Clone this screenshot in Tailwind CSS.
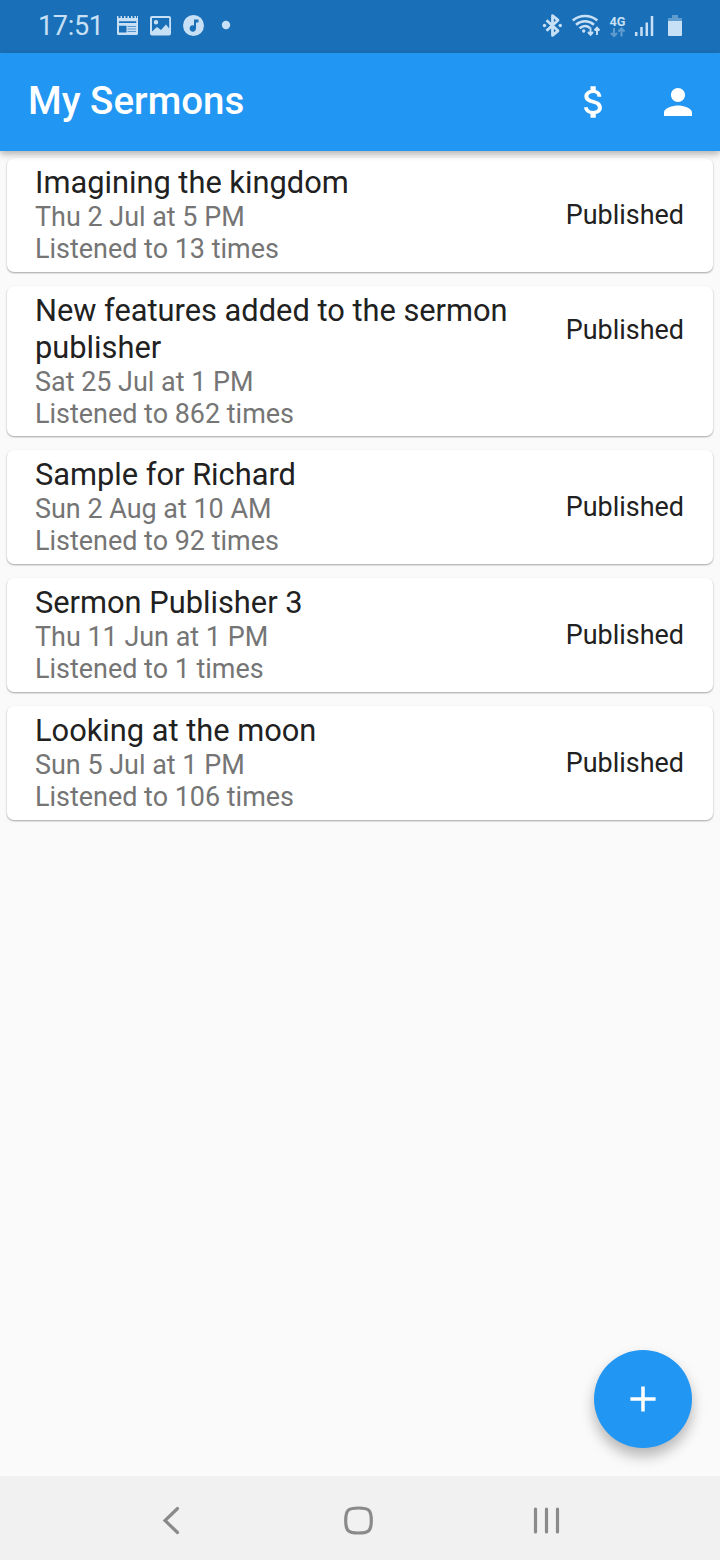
<!DOCTYPE html>
<html lang="en">
<head>
<meta charset="utf-8">
<title>My Sermons</title>
<script src="https://cdn.jsdelivr.net/npm/@tailwindcss/browser@4"></script>
</head>
<body class="bg-[#fafafa] font-[Roboto,sans-serif] text-[#212121]">
<div class="relative flex h-[1560px] w-[720px] flex-col overflow-hidden">
  <div class="z-10 flex h-[53px] shrink-0 items-start bg-[#1a70b8] pl-[38px] text-[#c8e0f5]">
    <span class="w-[74px] pt-[10px] text-[27px] leading-8 tracking-[-0.3px]">17:51</span>
    <svg class="h-[53px] w-[126px]" viewBox="112 0 126 53" fill="currentColor">
      <path fill-rule="evenodd" d="M117 16h1.500v2h2v-2h1.500v2h2v-2h1.500v2h2v-2h1.500v2h2v-2h1.500v2h2v-2h1.500v2h1v-2h1v17.500a1.500 1.500 0 0 1-1.500 1.500h-18a1.500 1.500 0 0 1-1.500-1.500zM119 21.300v1.700h17.200v-1.700zM119 25.800v6.700h7.500v-6.700z"/>
      <path d="M127.500 26.500h8.500M127.500 29h8.500M127.500 31.500h8.500" stroke="#1a70b8" stroke-width="1" opacity=".65"/>
      <path fill-rule="evenodd" d="M152 16h17a2 2 0 0 1 2 2v15.500a2 2 0 0 1-2 2h-17a2 2 0 0 1-2-2V18a2 2 0 0 1 2-2zM152 18v13.500l5-4.500 4 3 5-5.500 3.200 4V18zM156 20a2.200 2.200 0 1 1 0 4.400a2.200 2.200 0 0 1 0-4.400z"/>
      <circle cx="193.500" cy="25.500" r="10.500"/>
      <path d="M194 19.500h4.500v3H196v6a3.200 3.200 0 1 1-2-3z" fill="#1a70b8"/>
      <circle cx="226" cy="25" r="4.200"/>
    </svg>
    <svg class="ml-auto h-[53px] w-[180px]" viewBox="540 0 180 53" fill="none" stroke="currentColor" stroke-width="2.500">
      <path d="M546.500 20.300l11.500 10.500-5.500 4.500V15.700l5.500 4.500-11.500 10.500" stroke-linejoin="round" stroke-width="2.800"/>
      <circle cx="544.500" cy="25.500" r="1.700" fill="currentColor" stroke="none"/><circle cx="560.300" cy="25.500" r="1.700" fill="currentColor" stroke="none"/>
      <path d="M572.800 20.500c7-6 17.500-6 24.500 0M576 24.700c5.500-4.500 12.500-4.500 18 0M579.500 28.300c3.500-2.800 7.500-2.800 10.500-.3"/>
      <circle cx="583.700" cy="31" r="1.700" fill="currentColor" stroke="none"/>
      <path d="M590.500 27.500v7M588 32l2.500 2.800 2.500-2.800M597 35v-7M594.500 30.500l2.500-2.800 2.500 2.800" stroke-width="1.900"/>
      <text x="609.500" y="25.500" font-size="13.200" font-weight="700" fill="currentColor" stroke="none" textLength="16" lengthAdjust="spacingAndGlyphs">4G</text>
      <path d="M614 28v8M611 33l3 3 3-3M621.500 36.500v-8M618.500 31.500l3-3 3 3" opacity=".4" stroke-width="2"/>
      <path d="M636.200 32v4M641.500 27v9M646.800 22.500V36M652 16v20" stroke-width="2.500"/>
      <path d="M672 15h6v3h4v3h-14v-3h4z" fill="currentColor" stroke="none" opacity=".4"/>
      <path d="M668 21h14v14a1 1 0 0 1-1 1h-12a1 1 0 0 1-1-1z" fill="currentColor" stroke="none"/>
    </svg>
  </div>
  <header class="z-10 flex h-[98px] shrink-0 items-center bg-[#2196f3] pr-[21px] pl-7 text-white shadow-[0_3px_7px_rgba(0,0,0,0.3)]">
    <h1 class="-mt-[2px] text-[38.5px] leading-none font-medium">My Sermons</h1>
    <svg class="ml-auto size-[42px]" viewBox="0 0 24 24" fill="currentColor"><path d="M11.800 10.900c-2.270-.59-3-1.200-3-2.150 0-1.090 1.010-1.850 2.700-1.850 1.780 0 2.440.85 2.500 2.100h2.210c-.07-1.720-1.120-3.300-3.210-3.810V3h-3v2.160c-1.940.42-3.500 1.680-3.500 3.610 0 2.310 1.910 3.460 4.700 4.130 2.500.6 3 1.480 3 2.410 0 .69-.49 1.790-2.700 1.790-2.060 0-2.870-.92-2.980-2.100h-2.200c.12 2.190 1.760 3.420 3.680 3.830V21h3v-2.150c1.950-.37 3.500-1.500 3.500-3.550 0-2.840-2.430-3.810-4.700-4.400z"/></svg>
    <svg class="ml-[42px] size-[42px]" viewBox="0 0 24 24" fill="currentColor"><path d="M12 12c2.210 0 4-1.790 4-4s-1.790-4-4-4-4 1.790-4 4 1.790 4 4 4zm0 2c-2.670 0-8 1.340-8 4v2h16v-2c0-2.660-5.330-4-8-4z"/></svg>
  </header>
  <main class="flex grow flex-col gap-[14px] px-[7px] pt-[7px]">
    <article class="flex h-[114px] justify-between rounded-[7px] bg-white pt-[6px] pr-[29px] pl-7 shadow-[0_1px_2px_rgba(0,0,0,0.35)]">
      <div><h2 class="text-[30.8px] leading-[37px]">Imagining the kingdom</h2><p class="text-[26.95px] leading-8 text-[#757575]">Thu 2 Jul at 5 PM<br>Listened to 13 times</p></div>
      <span class="pt-[35px] text-[26.95px] leading-8">Published</span>
    </article>
    <article class="flex h-[150px] justify-between rounded-[7px] bg-white pt-[6px] pr-[29px] pl-7 shadow-[0_1px_2px_rgba(0,0,0,0.35)]">
      <div><h2 class="text-[30.8px] leading-[37px]">New features added to the sermon<br>publisher</h2><p class="text-[26.95px] leading-8 text-[#757575]">Sat 25 Jul at 1 PM<br>Listened to 862 times</p></div>
      <span class="pt-[22px] text-[26.95px] leading-8">Published</span>
    </article>
    <article class="flex h-[114px] justify-between rounded-[7px] bg-white pt-[6px] pr-[29px] pl-7 shadow-[0_1px_2px_rgba(0,0,0,0.35)]">
      <div><h2 class="text-[30.8px] leading-[37px]">Sample for Richard</h2><p class="text-[26.95px] leading-8 text-[#757575]">Sun 2 Aug at 10 AM<br>Listened to 92 times</p></div>
      <span class="pt-[35px] text-[26.95px] leading-8">Published</span>
    </article>
    <article class="flex h-[114px] justify-between rounded-[7px] bg-white pt-[6px] pr-[29px] pl-7 shadow-[0_1px_2px_rgba(0,0,0,0.35)]">
      <div><h2 class="text-[30.8px] leading-[37px]">Sermon Publisher 3</h2><p class="text-[26.95px] leading-8 text-[#757575]">Thu 11 Jun at 1 PM<br>Listened to 1 times</p></div>
      <span class="pt-[35px] text-[26.95px] leading-8">Published</span>
    </article>
    <article class="flex h-[114px] justify-between rounded-[7px] bg-white pt-[6px] pr-[29px] pl-7 shadow-[0_1px_2px_rgba(0,0,0,0.35)]">
      <div><h2 class="text-[30.8px] leading-[37px]">Looking at the moon</h2><p class="text-[26.95px] leading-8 text-[#757575]">Sun 5 Jul at 1 PM<br>Listened to 106 times</p></div>
      <span class="pt-[35px] text-[26.95px] leading-8">Published</span>
    </article>
  </main>
  <button class="absolute right-7 bottom-[112px] flex size-[98px] items-center justify-center rounded-full bg-[#2196f3] text-white shadow-[0_8px_14px_rgba(0,0,0,0.28)]" aria-label="Add">
    <svg class="size-[42px]" viewBox="0 0 24 24" fill="currentColor"><path d="M19.200 13h-6.200v6.200h-2v-6.200H4.800v-2h6.200V4.800h2v6.200h6.200z"/></svg>
  </button>
  <nav class="flex h-[84px] shrink-0 bg-[#f1f1f1]">
    <svg class="h-[84px] w-[720px]" viewBox="0 1476 720 84" fill="none" stroke="#8a8a8a" stroke-width="3.200">
      <path d="M177.500 1508.500l-12.500 12 12.500 12" stroke-linecap="round"/>
      <path d="M358.500 1508c10.500 0 12.800 2.300 12.800 12.500s-2.300 12.500-12.800 12.500-12.800-2.300-12.800-12.500 2.300-12.500 12.800-12.500z"/>
      <path d="M535.500 1509v23M546.500 1509v23M557.500 1509v23" stroke-linecap="round"/>
    </svg>
  </nav>
</div>
</body>
</html>
